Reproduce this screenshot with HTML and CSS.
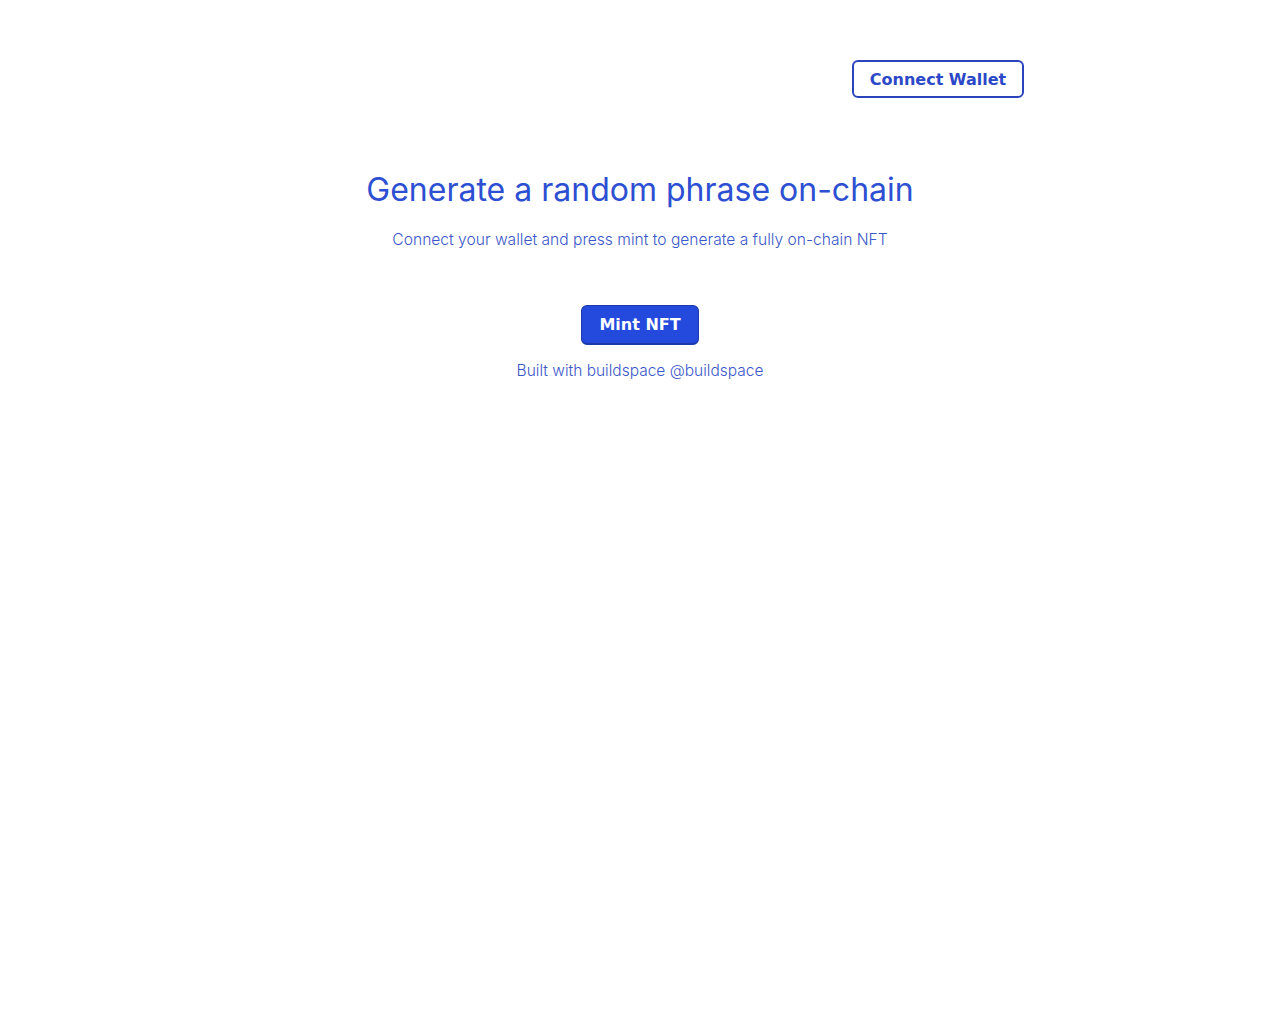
FILE: index.html
```html
<!DOCTYPE html>
<html lang="en">
<head>
<meta charset="utf-8">
<title>Random phrase NFT</title>
<link rel="stylesheet" href="styles.css">
</head>
<body>
<div class="container">
  <header class="topbar">
    <button class="connect-btn">Connect Wallet</button>
  </header>
  <main class="hero">
    <h1 class="title">Generate a random phrase on-chain</h1>
    <p class="subtitle">Connect your wallet and press mint to generate a fully on-chain NFT</p>
    <button class="mint-btn">Mint NFT</button>
    <p class="footer">Built with buildspace @buildspace</p>
  </main>
</div>
</body>
</html>
```
FILE: styles.css
```css
html, body {
  margin: 0;
  padding: 0;
  background: #ffffff;
}
body {
  font-family: "Inter", "Noto Sans", sans-serif;
  color: #2d4fd2;
}
.container {
  max-width: 768px;
  margin: 0 auto;
  padding-top: 60px;
}
.topbar {
  display: flex;
  justify-content: flex-end;
}
.connect-btn {
  font-family: "DejaVu Sans", sans-serif;
  font-weight: bold;
  font-size: 16px;
  color: #2b48c8;
  background: #ffffff;
  border: 2px solid #2a44bd;
  border-radius: 6px;
  height: 38px;
  width: 172px;
  padding: 0;
}
.hero {
  display: flex;
  flex-direction: column;
  align-items: center;
  padding-top: 70px;
}
.title {
  margin: 0;
  font-size: 32px;
  font-weight: 400;
  line-height: 44px;
  color: #2d4fd2;
}
.subtitle {
  margin: 17px 0 0;
  font-size: 15.6px;
  font-weight: 300;
  line-height: 22px;
  color: #3a57c9;
}
.mint-btn {
  margin-top: 54px;
  font-family: "DejaVu Sans", sans-serif;
  font-weight: bold;
  font-size: 16px;
  color: #ffffff;
  background: #2349dd;
  border: 1px solid #1c3aaa;
  border-bottom-width: 2px;
  border-radius: 6px;
  height: 40px;
  width: 118px;
  padding: 0;
}
.footer {
  margin: 15px 0 0;
  font-size: 15.5px;
  font-weight: 300;
  line-height: 22px;
  color: #3a57c9;
}
```
